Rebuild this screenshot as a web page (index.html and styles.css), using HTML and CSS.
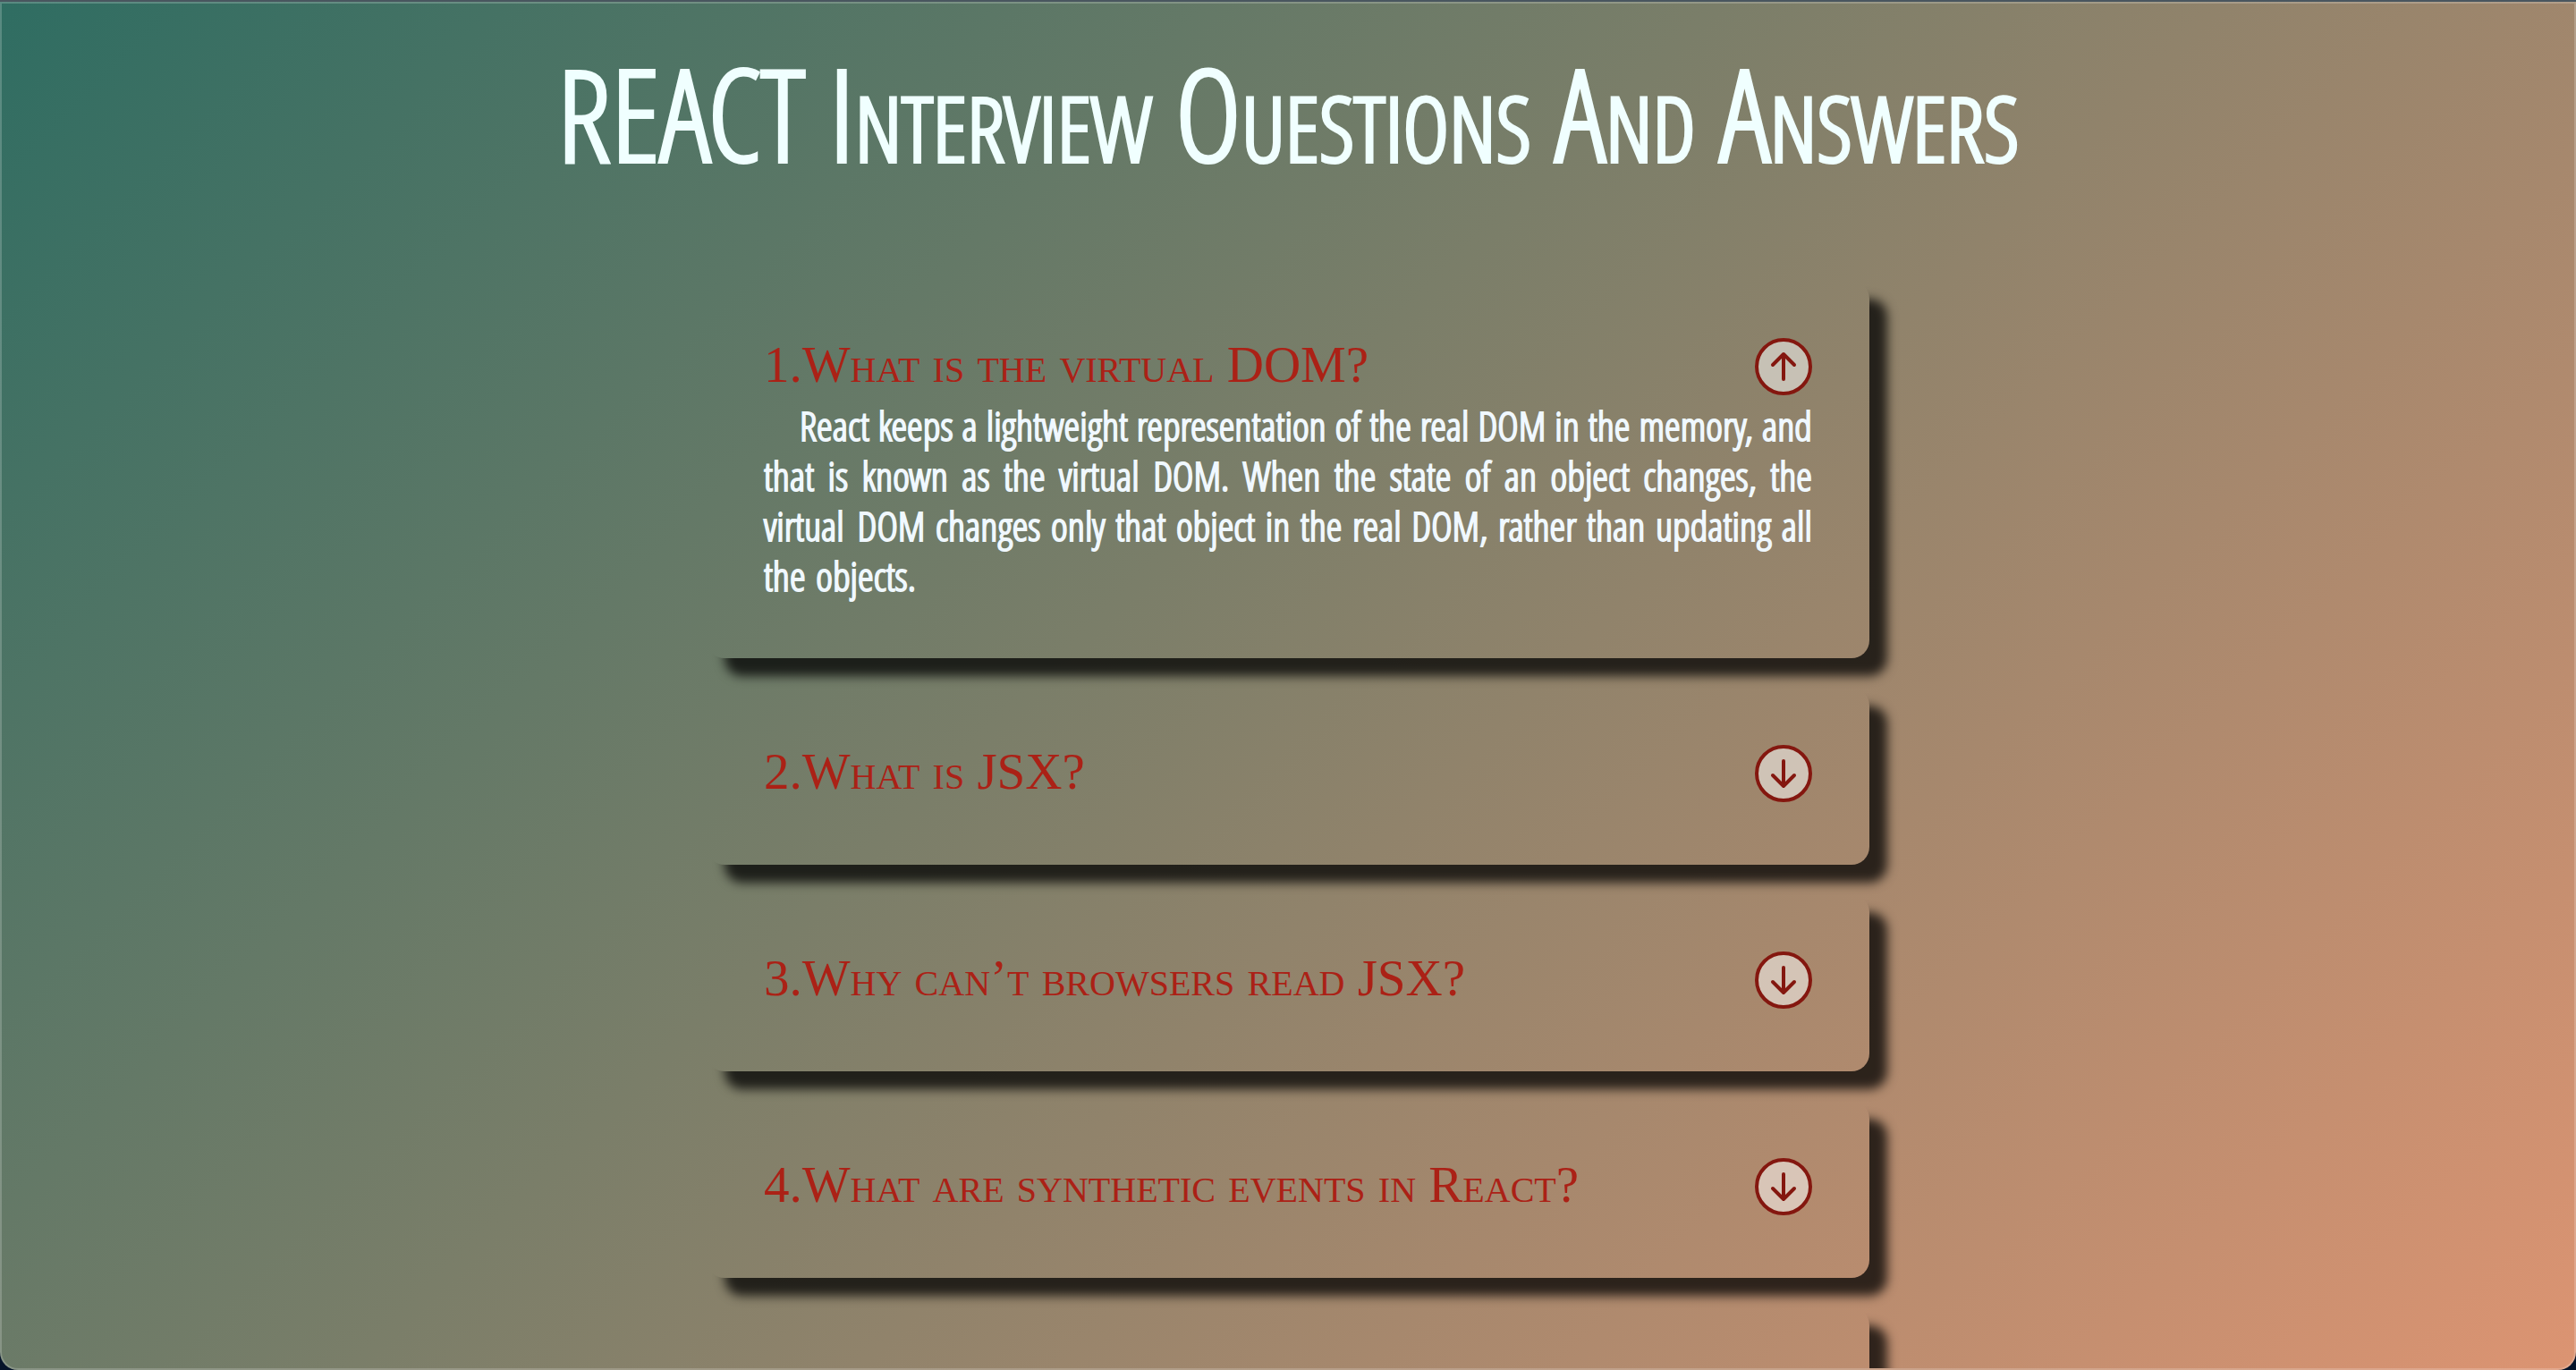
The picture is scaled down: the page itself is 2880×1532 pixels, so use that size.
FILE: index.html
```html
<!DOCTYPE html>
<html lang="en">
<head>
<meta charset="utf-8">
<title>REACT Interview Questions And Answers</title>
<link rel="stylesheet" href="styles.css">
</head>
<body>
<svg class="sprite" aria-hidden="true">
  <symbol id="arrow-up" viewBox="0 0 56 56"><path d="M28 42V14M16 26 28 14l12 12"/></symbol>
  <symbol id="arrow-down" viewBox="0 0 56 56"><path d="M28 14v28M16 30l12 12 12-12"/></symbol>
</svg>
<main class="page">
  <h1 class="title">REACT Interview Ouestions And Answers</h1>
  <div class="list">
    <section class="card">
      <div class="row">
        <h2 class="question">1.What is the virtual DOM?</h2>
        <button class="toggle" type="button" aria-expanded="true" aria-label="Hide answer"><svg><use href="#arrow-up"/></svg></button>
      </div>
      <p class="answer">React keeps a lightweight representation of the real DOM in the memory, and that is known as the virtual DOM. When the state of an object changes, the virtual&nbsp;DOM changes only that object in the real DOM, rather than updating all the&nbsp;objects.</p>
    </section>
    <section class="card">
      <div class="row">
        <h2 class="question">2.What is JSX?</h2>
        <button class="toggle" type="button" aria-expanded="false" aria-label="Show answer"><svg><use href="#arrow-down"/></svg></button>
      </div>
    </section>
    <section class="card">
      <div class="row">
        <h2 class="question">3.Why can’t browsers read JSX?</h2>
        <button class="toggle" type="button" aria-expanded="false" aria-label="Show answer"><svg><use href="#arrow-down"/></svg></button>
      </div>
    </section>
    <section class="card">
      <div class="row">
        <h2 class="question">4.What are synthetic events in React?</h2>
        <button class="toggle" type="button" aria-expanded="false" aria-label="Show answer"><svg><use href="#arrow-down"/></svg></button>
      </div>
    </section>
    <section class="card">
      <div class="row"></div>
    </section>
  </div>
</main>
</body>
</html>
```
FILE: styles.css
```css
* { box-sizing: border-box; }
html { background: #06142a; }
body {
  margin: 0;
  height: 100vh;
  overflow: hidden;
  border-top: 2px solid #49565f;
}
.sprite { display: none; }
.page {
  height: 100%;
  overflow: hidden;
  border: 2px solid rgba(255, 255, 255, 0.2);
  border-radius: 0 0 20px 20px;
  background: linear-gradient(135deg, #2f6d62, #dc9472) border-box;
}
.title {
  margin: 0;
  padding-top: 42px;
  height: 310px;
  text-align: center;
  font: 300 142px/160px "Open Sans Condensed Light", "Open Sans Light Condensed", "Open Sans Condensed", "Liberation Sans", sans-serif;
  font-variant: small-caps;
  -webkit-text-stroke: 4px azure;
  color: azure;
}
.list {
  display: flex;
  flex-direction: column;
  gap: 33px;
  max-width: 1300px;
  margin: 0 auto;
}
.card {
  padding: 64px;
  border-radius: 20px;
  box-shadow: 20px 20px 12px rgba(0, 0, 0, 0.75);
}
.row {
  display: flex;
  justify-content: space-between;
  align-items: flex-start;
  min-height: 70px;
}
.question {
  margin: 0;
  font: 400 57px/60px "Liberation Serif", serif;
  font-variant: small-caps;
  color: #ab2116;
}
.toggle {
  display: grid;
  place-items: center;
  width: 64px;
  height: 64px;
  padding: 0;
  border: 4px solid #84170f;
  border-radius: 50%;
  background: rgba(255, 255, 255, 0.5);
}
.toggle svg {
  width: 56px;
  height: 56px;
  fill: none;
  stroke: #84170f;
  stroke-width: 4;
  stroke-linecap: round;
  stroke-linejoin: round;
}
.answer {
  margin: 0;
  font: 300 45px/56px "Open Sans Condensed Light", "Open Sans Light Condensed", "Open Sans Condensed", "Liberation Sans", sans-serif;
  -webkit-text-stroke: 2px aliceblue;
  text-align: justify;
  text-indent: 40px;
  color: aliceblue;
}
```
